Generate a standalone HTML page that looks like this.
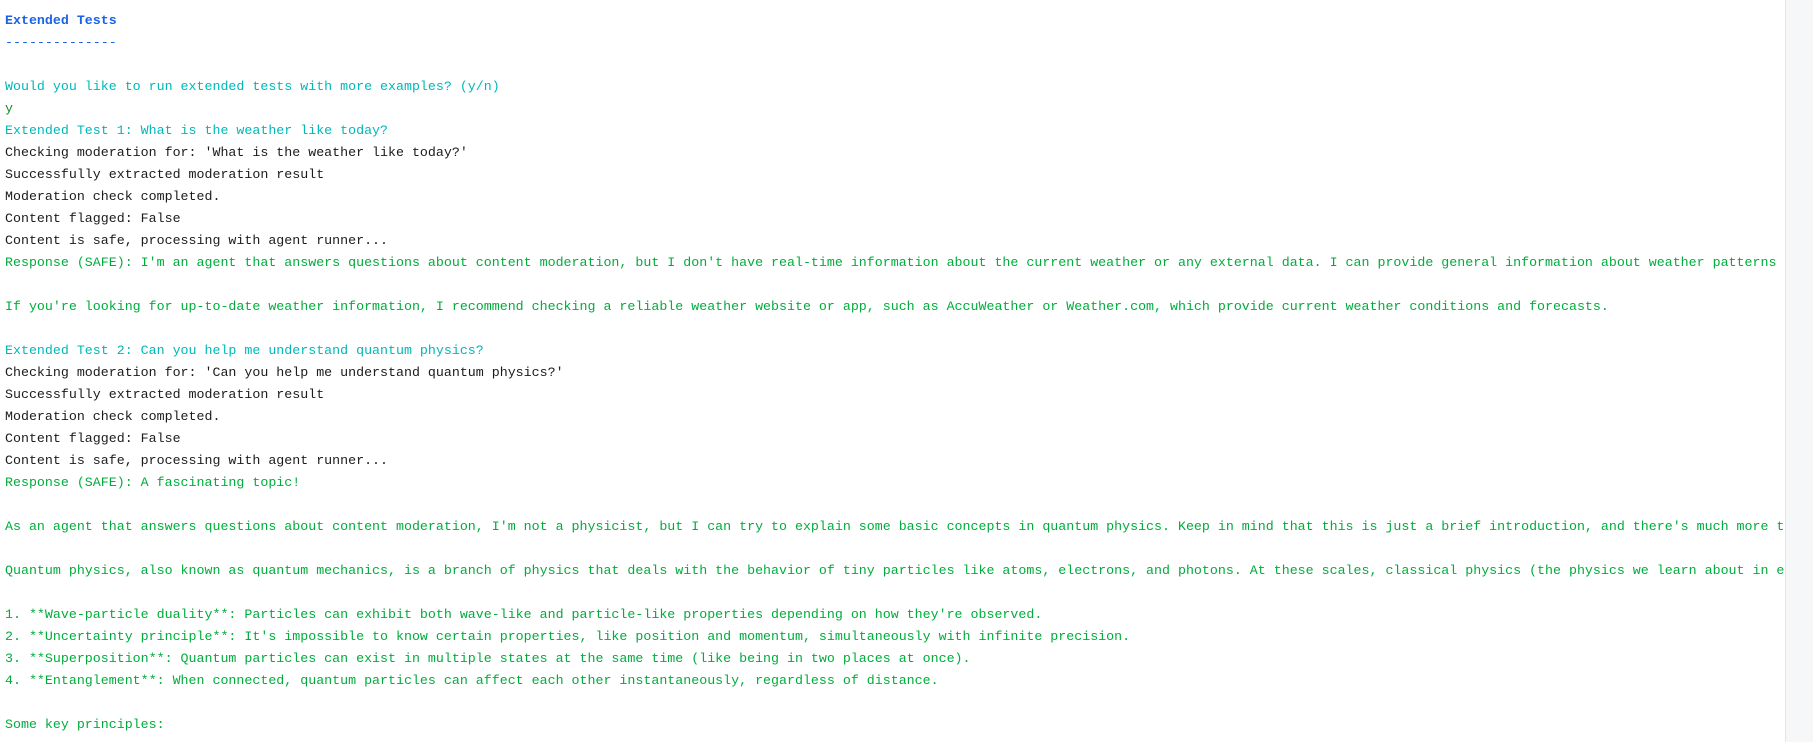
<!DOCTYPE html>
<html><head><meta charset="utf-8"><style>
html,body{margin:0;padding:0;background:#fff;width:1813px;height:742px;overflow:hidden}
#t{position:absolute;left:0;top:10px;width:1785px;height:732px;overflow:hidden;padding-left:5px;box-sizing:border-box;font-family:"Liberation Mono",monospace;font-size:13.3px;line-height:22px;white-space:pre;color:#1b1b1b}
#g{position:absolute;left:1785px;top:0;width:28px;height:742px;background:#f6f7f9;border-left:1px solid #e4e5e8}
.b{color:#1a62e6;font-weight:bold}.c{color:#00b8b8}.gr{color:#00ad3c}.y{color:#178a2a}
</style></head><body>
<div id="t"><span class="b">Extended Tests</span>
<span class="b" style="font-weight:normal">--------------</span>

<span class="c">Would you like to run extended tests with more examples? (y/n)</span>
<span class="y">y</span>
<span class="c">Extended Test 1: What is the weather like today?</span>
Checking moderation for: 'What is the weather like today?'
Successfully extracted moderation result
Moderation check completed.
Content flagged: False
Content is safe, processing with agent runner...
<span class="gr">Response (SAFE): I'm an agent that answers questions about content moderation, but I don't have real-time information about the current weather or any external data. I can provide general information about weather patterns and climate.</span>

<span class="gr">If you're looking for up-to-date weather information, I recommend checking a reliable weather website or app, such as AccuWeather or Weather.com, which provide current weather conditions and forecasts.</span>

<span class="c">Extended Test 2: Can you help me understand quantum physics?</span>
Checking moderation for: 'Can you help me understand quantum physics?'
Successfully extracted moderation result
Moderation check completed.
Content flagged: False
Content is safe, processing with agent runner...
<span class="gr">Response (SAFE): A fascinating topic!</span>

<span class="gr">As an agent that answers questions about content moderation, I'm not a physicist, but I can try to explain some basic concepts in quantum physics. Keep in mind that this is just a brief introduction, and there's much more to learn.</span>

<span class="gr">Quantum physics, also known as quantum mechanics, is a branch of physics that deals with the behavior of tiny particles like atoms, electrons, and photons. At these scales, classical physics (the physics we learn about in everyday life) doesn't apply.</span>

<span class="gr">1. **Wave-particle duality**: Particles can exhibit both wave-like and particle-like properties depending on how they're observed.</span>
<span class="gr">2. **Uncertainty principle**: It's impossible to know certain properties, like position and momentum, simultaneously with infinite precision.</span>
<span class="gr">3. **Superposition**: Quantum particles can exist in multiple states at the same time (like being in two places at once).</span>
<span class="gr">4. **Entanglement**: When connected, quantum particles can affect each other instantaneously, regardless of distance.</span>

<span class="gr">Some key principles:</span></div>
<div id="g"></div>
</body></html>
